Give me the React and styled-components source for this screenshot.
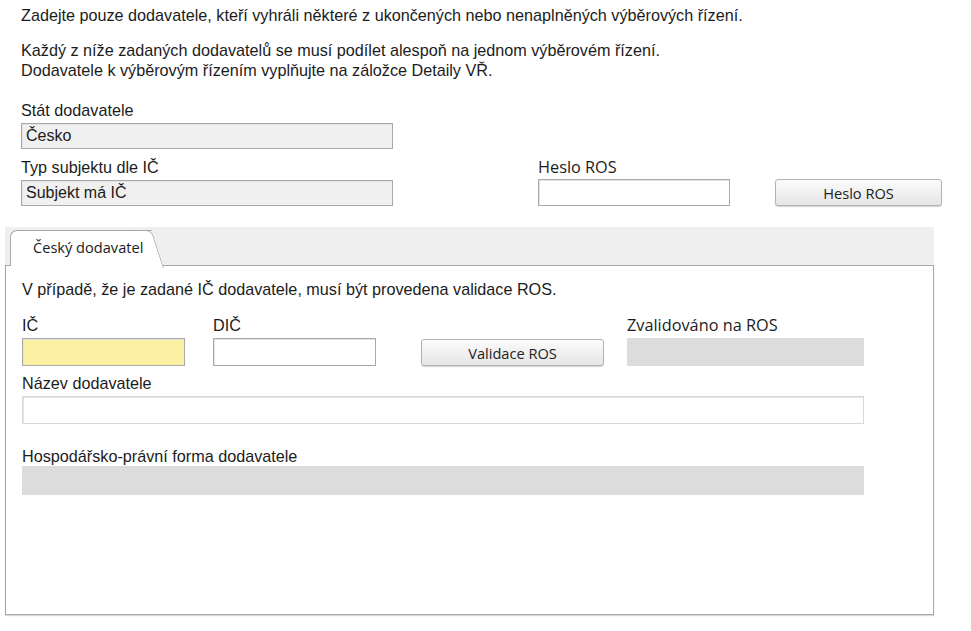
import React from 'react';
import styled, {createGlobalStyle} from 'styled-components';

const GlobalStyle = createGlobalStyle`
  html, body {
    margin: 0;
    padding: 0;
    background: #ffffff;
  }
  body {
    font-family: "Liberation Sans", Arial, sans-serif;
    color: #1c1c1c;
  }
`;

const Page = styled.div`
  width: 971px;
  height: 631px;
  padding-top: 5px;
  box-sizing: border-box;
`;

const Intro = styled.div`
  padding-left: 21px;
  font-size: 16.2px;
  line-height: 20px;
`;

const Para = styled.p`
  margin: 0 0 ${props => props.gap || 0}px;
`;

const Row = styled.div`
  display: flex;
  align-items: flex-end;
  padding-left: ${props => props.indent || 0}px;
  margin-top: ${props => props.top || 0}px;
`;

const Field = styled.div`
  display: flex;
  flex-direction: column;
  width: ${props => props.width}px;
  margin-left: ${props => props.left || 0}px;
`;

const Label = styled.div`
  font-family: ${props => (props.ui ? '"Open Sans", "Liberation Sans", sans-serif' : '"Liberation Sans", Arial, sans-serif')};
  font-size: ${props => (props.ui ? 16.3 : 16.2)}px;
  line-height: 18px;
  height: 18px;
  margin-bottom: ${props => props.gap || 0}px;
  white-space: nowrap;
`;

const Box = styled.div`
  box-sizing: border-box;
  height: ${props => props.h || 26}px;
  padding: 0 4px;
  font-size: 16px;
  line-height: ${props => (props.h || 26) - 2}px;
  background: ${props =>
    props.kind === 'readonly' ? '#f0f0f0' :
    props.kind === 'yellow' ? '#fcf0a2' :
    props.kind === 'disabled' ? '#dcdcdc' : '#ffffff'};
  border: 1px solid ${props =>
    props.kind === 'disabled' ? '#dcdcdc' :
    props.kind === 'light' ? '#d8d8d8' : '#a9a9a9'};
  box-shadow: ${props =>
    props.kind === 'disabled' ? 'none' : 'inset 1px 1px 0 #e4e4e4'};
`;

const Button = styled.button`
  box-sizing: border-box;
  width: ${props => props.width}px;
  height: 27px;
  margin-left: ${props => props.left || 0}px;
  font-family: "Open Sans", "Liberation Sans", sans-serif;
  font-size: 14.6px;
  color: #222;
  background: linear-gradient(#fbfbfb, #e6e6e6);
  border: 1px solid #b4b4b4;
  border-radius: 3px;
  box-shadow: 0 1px 1px rgba(0, 0, 0, 0.18);
  padding: 0;
`;

const Tabs = styled.div`
  margin: 21px 0 0 5px;
  width: 929px;
`;

const TabStrip = styled.div`
  display: flex;
  align-items: flex-end;
  height: 38px;
  background: #efefef;
  padding-left: 5px;
`;

const Tab = styled.div`
  position: relative;
  height: 36px;
  width: 142px;
  box-sizing: border-box;
  padding-left: 22px;
  font-family: "Open Sans", "Liberation Sans", sans-serif;
  font-size: 14.6px;
  line-height: 32px;
  background: #ffffff;
  border: 1px solid #a8a8a8;
  border-right: none;
  border-bottom: none;
  border-top-left-radius: 7px;
  margin-bottom: -1px;
  z-index: 1;

  &::after {
    content: '';
    position: absolute;
    top: -1px;
    right: -12px;
    width: 22px;
    height: 37px;
    background: #ffffff;
    border-top: 1px solid #a8a8a8;
    border-right: 1px solid #a8a8a8;
    border-top-right-radius: 6px;
    transform: skewX(18deg);
    transform-origin: bottom left;
    z-index: -1;
  }
`;

const Panel = styled.div`
  box-sizing: border-box;
  height: 350px;
  border: 1px solid #a8a8a8;
  box-shadow: 0 1px 1px rgba(0, 0, 0, 0.15);
  background: #ffffff;
  padding: 14px 0 0 16px;
`;

const Note = styled.div`
  font-size: 16.2px;
  line-height: 18px;
`;

export default function App() {
  return (
    <Page>
      <GlobalStyle />
      <Intro>
        <Para gap={15}>Zadejte pouze dodavatele, kteří vyhráli některé z ukončených nebo nenaplněných výběrových řízení.</Para>
        <Para>Každý z níže zadaných dodavatelů se musí podílet alespoň na jednom výběrovém řízení.</Para>
        <Para>Dodavatele k výběrovým řízením vyplňujte na záložce Detaily VŘ.</Para>
      </Intro>

      <Row indent={21} top={21}>
        <Field width={372}>
          <Label gap={4}>Stát dodavatele</Label>
          <Box kind="readonly">Česko</Box>
        </Field>
      </Row>

      <Row indent={21} top={9}>
        <Field width={372}>
          <Label gap={4}>Typ subjektu dle IČ</Label>
          <Box kind="readonly">Subjekt má IČ</Box>
        </Field>
        <Field width={192} left={145}>
          <Label ui gap={3}>Heslo ROS</Label>
          <Box h={27} />
        </Field>
        <Button width={167} left={45}>Heslo ROS</Button>
      </Row>

      <Tabs>
        <TabStrip>
          <Tab>Český dodavatel</Tab>
        </TabStrip>
        <Panel>
          <Note>V případě, že je zadané IČ dodavatele, musí být provedena validace ROS.</Note>
          <Row top={18}>
            <Field width={163}>
              <Label gap={4}>IČ</Label>
              <Box kind="yellow" h={28} />
            </Field>
            <Field width={163} left={28}>
              <Label gap={4}>DIČ</Label>
              <Box h={28} />
            </Field>
            <Button width={183} left={45}>Validace ROS</Button>
            <Field width={237} left={23}>
              <Label ui gap={4}>Zvalidováno na ROS</Label>
              <Box kind="disabled" h={28} />
            </Field>
          </Row>
          <Row top={8}>
            <Field width={842}>
              <Label gap={4}>Název dodavatele</Label>
              <Box kind="light" h={28} />
            </Field>
          </Row>
          <Row top={23}>
            <Field width={842}>
              <Label gap={1}>Hospodářsko-právní forma dodavatele</Label>
              <Box kind="disabled" h={29} />
            </Field>
          </Row>
        </Panel>
      </Tabs>
    </Page>
  );
}
